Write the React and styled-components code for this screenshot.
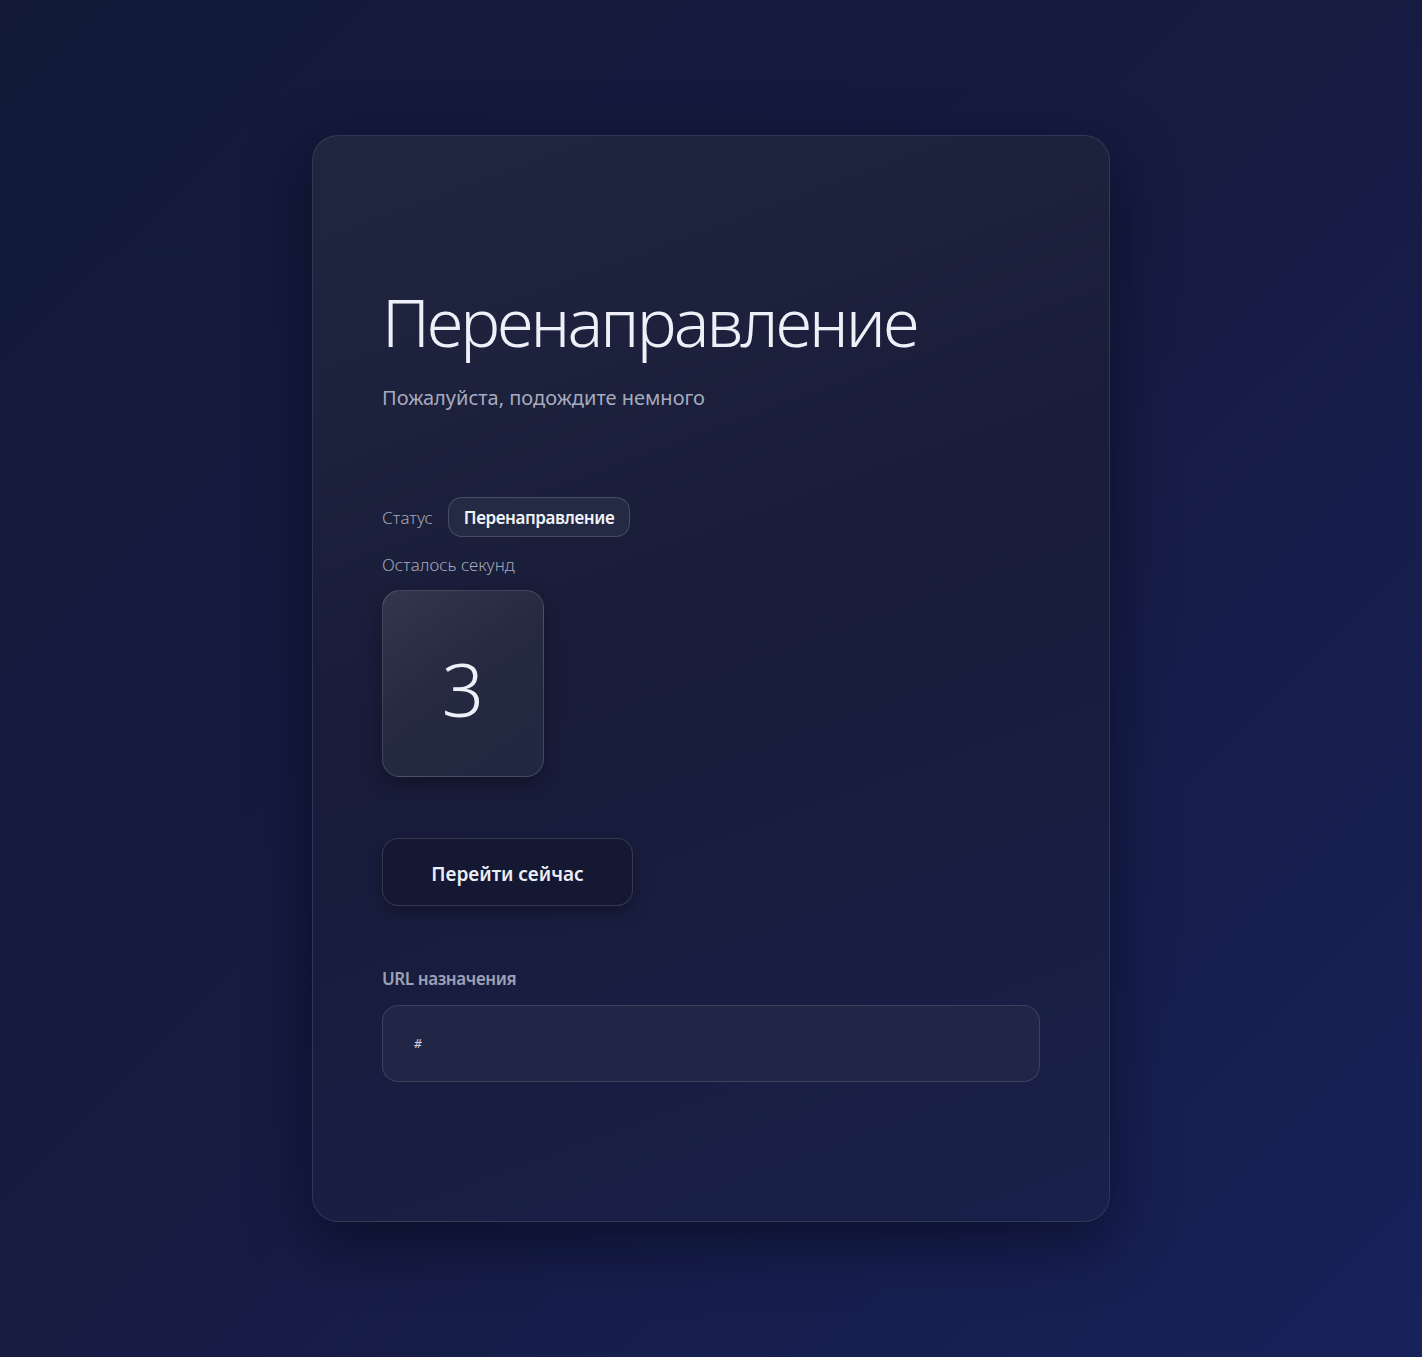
import styled, { createGlobalStyle } from "styled-components";

const GlobalStyle = createGlobalStyle`
  * { box-sizing: border-box; }
  html, body { margin: 0; padding: 0; }
  body {
    font-family: "Noto Sans", "Open Sans", "DejaVu Sans", sans-serif;
    background: linear-gradient(135deg, #121a38 0%, #161b42 50%, #18225a 100%);
    color: #e8eaf4;
  }
`;

const Page = styled.div`
  min-height: 100vh;
  display: flex;
  align-items: center;
  justify-content: center;
`;

const Card = styled.main`
  width: 798px;
  height: 1087px;
  padding: 147px 69px 70px;
  border-radius: 26px;
  border: 1px solid rgba(255, 255, 255, 0.1);
  background: linear-gradient(160deg, #212640 0%, #181c39 45%, #19204a 100%);
  box-shadow: 0 20px 60px rgba(4, 6, 20, 0.55);
  display: flex;
  flex-direction: column;
`;

const Title = styled.h1`
  margin: 0;
  font-size: 67px;
  font-weight: 300;
  line-height: 1.15;
  letter-spacing: -2.8px;
  color: #eef0f8;
`;

const Subtitle = styled.p`
  margin: 24px 0 0;
  font-size: 20px;
  color: #a7abbe;
`;

const StatusRow = styled.div`
  margin-top: 86px;
  display: flex;
  align-items: center;
  gap: 15px;
`;

const Label = styled.span`
  font-size: 17px;
  font-weight: ${(p) => (p.$bold ? 600 : 300)};
  letter-spacing: ${(p) => (p.$bold ? "-0.4px" : "0")};
  color: ${(p) => (p.$bold ? "#9ca1b5" : "#a3a7b8")};
`;

const Badge = styled.span`
  height: 40px;
  padding: 0 15px;
  display: inline-flex;
  align-items: center;
  border-radius: 14px;
  border: 1px solid rgba(255, 255, 255, 0.16);
  background: #252a44;
  font-size: 17px;
  font-weight: 600;
  letter-spacing: -0.4px;
  color: #f1f2f8;
`;

const Block = styled.div`
  margin-top: ${(p) => p.$top || 0}px;
  display: flex;
  flex-direction: column;
  align-items: flex-start;
  gap: ${(p) => p.$gap || 0}px;
`;

const Counter = styled.div`
  width: 162px;
  height: 187px;
  border-radius: 18px;
  border: 1px solid rgba(255, 255, 255, 0.14);
  background: linear-gradient(145deg, #33374d 0%, #252a42 45%, #222741 100%);
  box-shadow: 0 8px 20px rgba(0, 0, 0, 0.3);
  display: flex;
  align-items: center;
  justify-content: center;
  font-size: 74px;
  font-weight: 300;
  color: #eef0f8;
  padding-top: 10px;
`;

const Button = styled.button`
  margin-top: 61px;
  align-self: flex-start;
  width: 251px;
  height: 68px;
  border-radius: 16px;
  border: 1px solid rgba(255, 255, 255, 0.14);
  background: #141833;
  box-shadow: 0 6px 16px rgba(0, 0, 0, 0.3);
  font-family: inherit;
  font-size: 19px;
  font-weight: 600;
  color: #eceef6;
  padding-top: 4px;
  cursor: pointer;
`;

const UrlField = styled.div`
  width: 100%;
  height: 77px;
  border-radius: 16px;
  border: 1px solid rgba(255, 255, 255, 0.12);
  background: #222646;
  display: flex;
  align-items: center;
  padding: 0 31px;
  font-family: "DejaVu Sans Mono", "Liberation Mono", monospace;
  font-size: 13px;
  color: #c8cbd8;
`;

export default function App() {
  return (
    <>
      <GlobalStyle />
      <Page>
        <Card>
          <Title>Перенаправление</Title>
          <Subtitle>Пожалуйста, подождите немного</Subtitle>
          <StatusRow>
            <Label>Статус</Label>
            <Badge>Перенаправление</Badge>
          </StatusRow>
          <Block $top={16} $gap={14}>
            <Label>Осталось секунд</Label>
            <Counter>3</Counter>
          </Block>
          <Button>Перейти сейчас</Button>
          <Block $top={61} $gap={15}>
            <Label $bold>URL назначения</Label>
            <UrlField>#</UrlField>
          </Block>
        </Card>
      </Page>
    </>
  );
}
